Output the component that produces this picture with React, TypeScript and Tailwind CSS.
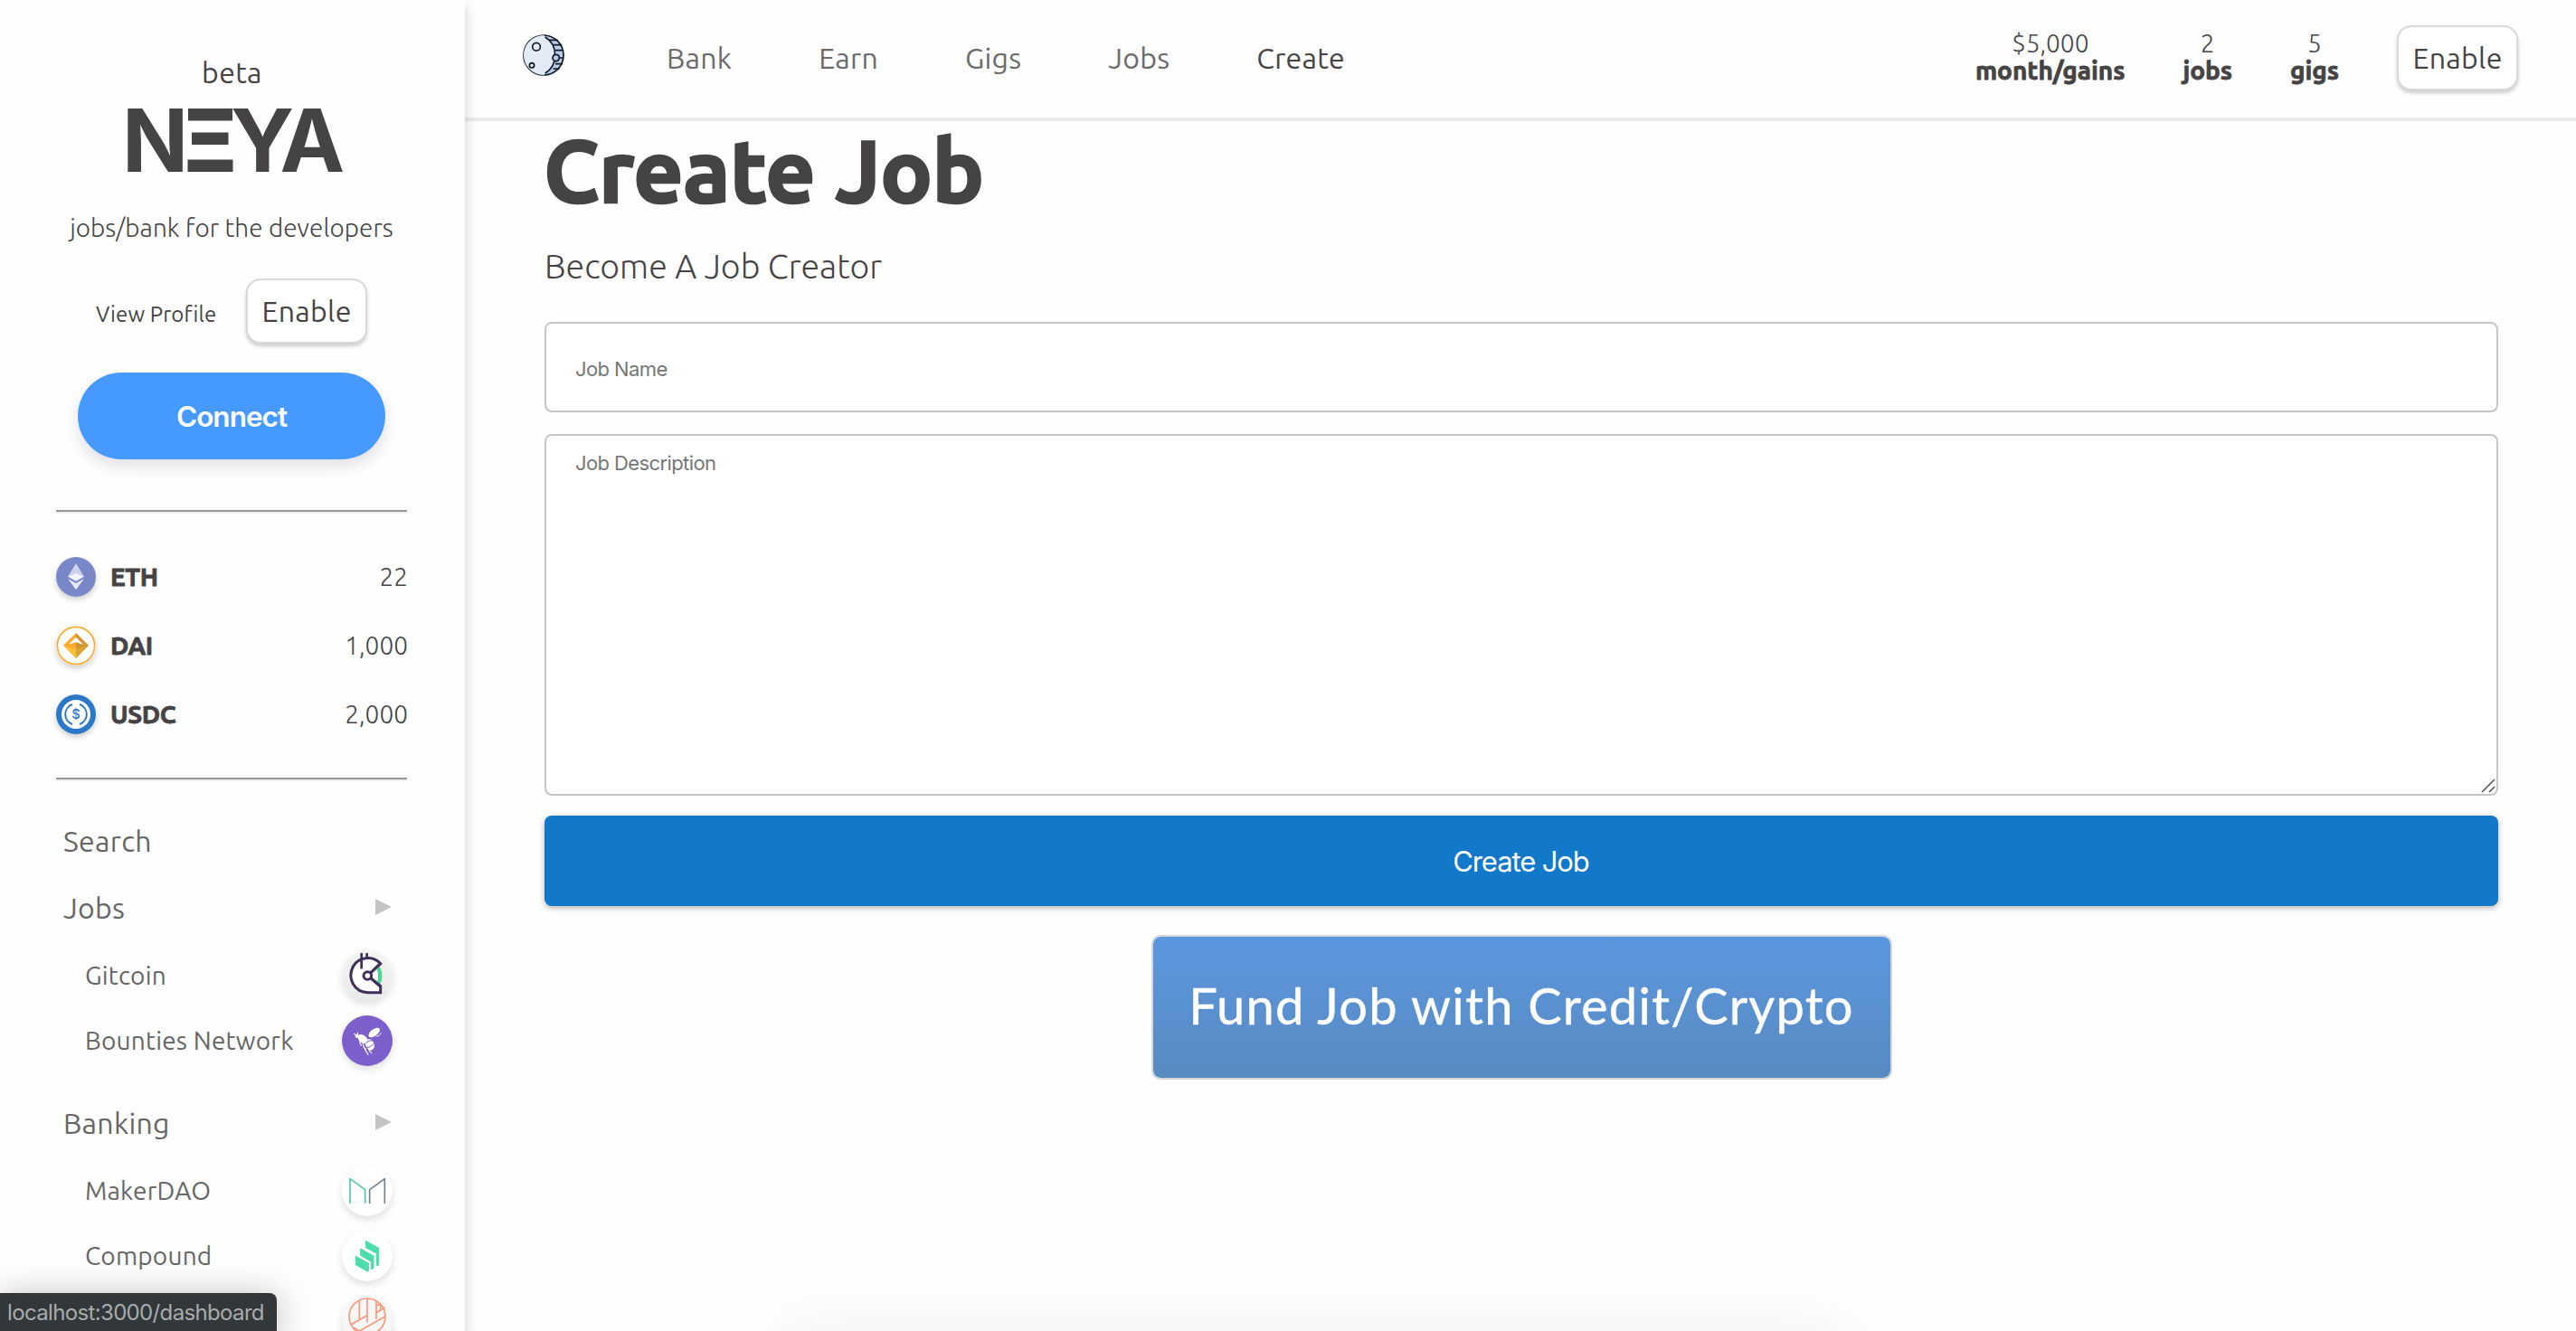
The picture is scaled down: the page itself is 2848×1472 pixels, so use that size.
import type { ReactNode } from "react";
import { clsx } from "clsx";

const navItems = ["Bank", "Earn", "Gigs", "Jobs", "Create"];
const activeItem = "Create";

const stats = [
  { value: "$5,000", label: "month/gains" },
  { value: "2", label: "jobs" },
  { value: "5", label: "gigs" },
];

const balances = [
  { symbol: "ETH", amount: "22", icon: <EthIcon /> },
  { symbol: "DAI", amount: "1,000", icon: <DaiIcon /> },
  { symbol: "USDC", amount: "2,000", icon: <UsdcIcon /> },
];

function MoonIcon() {
  return (
    <svg viewBox="54 53 138 138" className="mb-[6px] size-[46px]" fill="none" stroke="#111827" strokeWidth="5">
      <circle cx="123" cy="122" r="66" fill="#b9cce6" />
      <path d="M123 56a66 66 0 0 0 0 132l8-6c42-26 42-94 0-120z" fill="#e4ebf7" stroke="none" />
      <path d="M128 62c44 26 44 94 0 120" />
      <path d="M142 72h28M156 88h28M162 106h26M162 151h24M154 167h22" />
      <circle cx="99" cy="94" r="13" />
      <circle cx="84" cy="156" r="8" />
      <path d="M188 131h-12M165 120a11 11 0 1 0 10 11c0-6-4-11-10-11z" fill="#b9cce6" />
    </svg>
  );
}

function EthIcon() {
  return (
    <svg viewBox="36 48 132 132" className="size-full">
      <circle cx="102" cy="114" r="66" fill="#7986c7" />
      <path d="M102 69 75 113l27-12 27 12z" fill="#cdd2eb" />
      <path d="m75 113 27-12 27 12-27 15z" fill="#f4f5fb" />
      <path d="m75 120 27 15 27-15-27 37z" fill="#e6e8f5" />
    </svg>
  );
}

function DaiIcon() {
  return (
    <svg viewBox="36 276 132 132" className="size-full">
      <circle cx="102" cy="342" r="66" fill="#fff" />
      <circle cx="102" cy="342" r="62" fill="none" stroke="#fba92c" strokeWidth="5" />
      <path d="M60 341 102 300v84z" fill="#f9a92e" />
      <path d="m102 300 42 41-42 43z" fill="#d39531" />
      <path d="m78 338 24-24 24 24-24-7z" fill="#fff" />
      <path d="m62 343 40 10v31z" fill="#fcc137" />
      <path d="m142 343-40 10v31z" fill="#dca637" />
    </svg>
  );
}

function UsdcIcon() {
  return (
    <svg viewBox="36 504 132 132" className="size-full">
      <circle cx="102" cy="570" r="66" fill="#2b78c8" />
      <circle cx="102" cy="570" r="48" fill="#fff" />
      <path
        d="M90 537a35 35 0 0 0 0 66M114 537a35 35 0 0 1 0 66"
        fill="none"
        stroke="#2b78c8"
        strokeWidth="6"
      />
      <text
        x="102"
        y="586"
        textAnchor="middle"
        fill="#2b78c8"
        className="font-['Inter',sans-serif] text-[44px] font-medium"
      >
        $
      </text>
    </svg>
  );
}

function GitcoinIcon() {
  return (
    <svg viewBox="84 60 168 168" className="size-full" fill="none">
      <path
        d="M170 144 212 104C185 74 137 83 121 114c-20 40 4 86 50 86h41v-20z"
        fill="#fff"
        stroke="#3e2f5b"
        strokeWidth="9"
      />
      <path d="M203 117c12 14 12 38 1 53l-26-20v-12z" fill="#fff" />
      <path d="M204 118c9 15 9 37 1 51" stroke="#4cd796" strokeWidth="13" />
      <path d="M212 104 170 144l42 35" stroke="#3e2f5b" strokeWidth="9" />
      <circle cx="169" cy="144" r="13" fill="#fff" stroke="#3e2f5b" strokeWidth="9" />
      <path d="M149 72v46M167 72v14" stroke="#3e2f5b" strokeWidth="8" strokeLinecap="round" />
    </svg>
  );
}

function BeeIcon() {
  return (
    <svg viewBox="84 276 168 168" className="size-full" fill="#fff">
      <ellipse cx="191" cy="333" rx="22" ry="11" transform="rotate(-36 191 333)" />
      <path d="M197 345c9 0 14-4 17-11" fill="none" stroke="#fff" strokeWidth="3" />
      <ellipse cx="153" cy="354" rx="19" ry="12" transform="rotate(38 153 354)" />
      <circle cx="134" cy="345" r="6" />
      <ellipse cx="177" cy="373" rx="14" ry="19" transform="rotate(-20 177 373)" />
      <path
        d="M161 369c8-8 20-12 30-8M164 384c10-1 20-8 27-15"
        fill="none"
        stroke="#7d5fcb"
        strokeWidth="3"
      />
      <path
        d="M132 342l-8-5M136 340v-8M143 360c0 8 3 12 6 17M153 364c1 12 5 22 11 31M161 384c2 10 5 17 11 23M173 391l10 10"
        fill="none"
        stroke="#fff"
        strokeWidth="3.5"
      />
    </svg>
  );
}

function MakerIcon() {
  return (
    <svg viewBox="84 24 168 168" className="size-full" fill="none" strokeWidth="5" strokeLinejoin="round">
      <path d="M111 150V68l50 36v46" stroke="#52c6b0" />
      <path d="M226 150V68l-50 36v46" stroke="#708390" />
    </svg>
  );
}

function CompoundIcon() {
  return (
    <svg viewBox="84 240 168 168" className="size-full" fill="#4ddcab" stroke="#4ddcab" strokeWidth="3" strokeLinejoin="round">
      <path d="m130 325 42 23v26l-4 1-38-22z" />
      <path d="m146 300 43 24v41l-8 3v-25l-35-21z" />
      <path d="m163 274 43 24v56l-7 3v-41l-36-20z" />
    </svg>
  );
}

function DharmaIcon() {
  return (
    <svg viewBox="84 456 168 168" className="size-full" fill="none" stroke="#f79a7c" strokeWidth="5">
      <circle cx="168" cy="525" r="60" />
      <path d="M142 472v64M168 465v80M198 474v59M114 552l54-31M120 561l22 12 84-47M198 512l29-17M198 490l14-7M212 484v22" />
    </svg>
  );
}

const menu = [
  {
    title: "Jobs",
    items: [
      { label: "Gitcoin", icon: <GitcoinIcon />, badge: "bg-linear-to-b from-[#f2f5f2] to-[#e9eae9]" },
      { label: "Bounties Network", icon: <BeeIcon />, badge: "bg-[#7d5fcb]" },
    ],
  },
  {
    title: "Banking",
    items: [
      { label: "MakerDAO", icon: <MakerIcon />, badge: "bg-white" },
      { label: "Compound", icon: <CompoundIcon />, badge: "bg-white" },
      { label: "", icon: <DharmaIcon />, badge: "bg-[#f7f7f7]" },
    ],
  },
];

function Logo() {
  return (
    <svg viewBox="62 116 388 78" className="mt-4 h-[78px] w-[388px] shrink-0 overflow-visible" fill="#454344">
      <g className="font-['Inter',sans-serif] text-[96px] font-bold">
        <text x="135" y="190">N</text>
        <text x="255" y="190">Y</text>
        <text x="309.5" y="190">A</text>
      </g>
      <rect x="208" y="120" width="49" height="13.5" />
      <rect x="212" y="146.5" width="40.5" height="13.5" />
      <rect x="207.5" y="176.5" width="50" height="13.5" />
    </svg>
  );
}

function EnableButton() {
  return (
    <button
      type="button"
      className="h-[72px] w-[134px] shrink-0 rounded-[16px] border-2 border-[#d9d9d9] bg-white text-[32px] tracking-[0.3px] shadow-[0_3px_4px_rgba(0,0,0,0.2)]"
    >
      Enable
    </button>
  );
}

function Divider() {
  return <hr className="mt-8 h-1 w-full shrink-0 border-t-2 border-b-2 border-t-[#9a9a9a] border-b-[#eeeeee]" />;
}

function Badge({ className, children }: { className: string; children: ReactNode }) {
  return (
    <span
      className={clsx(
        "size-14 shrink-0 overflow-hidden rounded-full shadow-[0_4px_8px_rgba(0,0,0,0.12)]",
        className,
      )}
    >
      {children}
    </span>
  );
}

function Sidebar() {
  return (
    <aside className="relative z-10 flex h-full w-[514px] shrink-0 flex-col overflow-y-clip bg-[#fefefe] pt-[60px] pr-16 pl-[62px] shadow-[0_8px_14px_rgba(0,0,0,0.2)]">
      <p className="pl-px text-center text-[32px] leading-10 tracking-[0.4px]">beta</p>
      <Logo />
      <p className="mt-[38px] text-center text-[28px] leading-10 font-light tracking-[0.04px] whitespace-nowrap">
        jobs/bank for the developers
      </p>

      <div className="mt-9 flex items-center pl-11">
        <a className="mt-2 w-[166px] text-2xl tracking-[0.1px]">View Profile</a>
        <EnableButton />
      </div>
      <button
        type="button"
        className="mx-auto mt-8 h-24 w-[340px] shrink-0 rounded-full bg-[#469aff] pt-px font-['Inter',sans-serif] text-[31.5px] font-semibold tracking-[-1px] text-white shadow-[0_8px_16px_rgba(50,50,93,0.14)]"
      >
        Connect
      </button>

      <div className="mt-6">
        <Divider />
      </div>
      <ul className="mt-8 text-[28px]">
        {balances.map((item) => (
          <li key={item.symbol} className="flex h-[76px] items-center">
            <span className="size-11 rounded-full shadow-[0_3px_6px_rgba(0,0,0,0.2)]">{item.icon}</span>
            <b className="ml-4 tracking-[-0.4px] [-webkit-text-stroke:0.8px]">{item.symbol}</b>
            <span className="-mr-px ml-auto font-light">{item.amount}</span>
          </li>
        ))}
      </ul>
      <Divider />

      <nav className="mt-[29px] text-[#666666]">
        <a className="flex h-[74px] items-center pl-2 text-[32px] tracking-[0.3px]">Search</a>
        {menu.map((section) => (
          <section key={section.title} className="mb-[18px]">
            <h2 className="mb-0.5 flex h-[74px] items-center justify-between pr-[17px] pl-2 text-[32px] tracking-[0.3px]">
              {section.title}
              <svg viewBox="0 0 18 20" className="mb-[3px] h-5 w-[18px]" fill="#c4c4c4">
                <path d="M0 1v18l18-9z" />
              </svg>
            </h2>
            {section.items.map((item, i) => (
              <a key={i} className="flex h-[72px] items-center justify-between pr-4 pl-8 text-[28px] tracking-[0.2px]">
                <span>{item.label}</span>
                <Badge className={item.badge}>{item.icon}</Badge>
              </a>
            ))}
          </section>
        ))}
      </nav>
    </aside>
  );
}

function Header() {
  return (
    <header className="flex h-[134px] shrink-0 items-center border-b-4 border-[#ebebeb] pr-16 pb-0.5 pl-16">
      <MoonIcon />
      <nav className="ml-[113px] flex gap-24 text-[32px] tracking-[0.25px]">
        {navItems.map((item) => (
          <a key={item} className={item === activeItem ? "text-[#454344]" : "text-[#6b6b6b]"}>
            {item}
          </a>
        ))}
      </nav>
      <div className="ml-auto flex items-center gap-16">
        {stats.map((stat) => (
          <div key={stat.label} className="mb-[3px] flex flex-col items-center text-[28px] leading-[30px]">
            <span className="font-light">{stat.value}</span>
            <b className="[-webkit-text-stroke:0.8px]">{stat.label}</b>
          </div>
        ))}
        <EnableButton />
      </div>
    </header>
  );
}

function JobForm() {
  const field =
    "block w-full rounded-lg border-2 border-[#c6c6c6] bg-white pl-8 font-['Inter',sans-serif] text-[22px] leading-7 tracking-[-0.6px] placeholder:text-[#777777]";

  return (
    <form className="mt-10 flex flex-col">
      <input placeholder="Job Name" className={clsx(field, "h-[100px] pt-1")} />
      <div className="relative mt-6 h-[400px]">
        <textarea placeholder="Job Description" className={clsx(field, "h-full resize-none pt-4")} />
        <svg
          viewBox="0 0 16 16"
          className="absolute right-[3px] bottom-[3px] size-4"
          fill="none"
          stroke="#555555"
          strokeWidth="1.6"
        >
          <path d="M1 15 15 1M9 15l6-6" />
        </svg>
      </div>
      <button
        type="button"
        className="mt-[22px] h-[100px] rounded-lg bg-[#1278c9] pt-0.5 pr-px font-['Inter',sans-serif] text-[31px] tracking-[-1.1px] text-white shadow-[0_2px_6px_rgba(0,0,0,0.3)]"
      >
        Create Job
      </button>
      <button
        type="button"
        className="mx-auto mt-8 h-40 w-[819px] rounded-[10px] border-2 border-[#d4d6da] bg-linear-to-b from-[#5b97de] to-[#588ac2] bg-clip-padding pb-[5px] font-['Lato',sans-serif] text-[56px] tracking-[1.2px] whitespace-nowrap text-white [-webkit-text-stroke:0.4px]"
      >
        Fund Job with Credit/Crypto
      </button>
    </form>
  );
}

export default function App() {
  return (
    <div className="relative flex h-[1472px] w-[2848px] overflow-hidden bg-[#fefefe] font-['Ubuntu','Noto_Sans',sans-serif] text-[#454344]">
      <Sidebar />
      <div className="flex min-w-0 flex-1 flex-col">
        <Header />
        <main className="pr-[86px] pl-[88px]">
          <h1 className="-ml-px text-[96px] leading-[110px] font-bold tracking-[-0.4px] [-webkit-text-stroke:2.6px]">
            Create Job
          </h1>
          <p className="mt-7 text-[37.5px] leading-[44px] font-light">Become A Job Creator</p>
          <JobForm />
        </main>
      </div>

      {/* link target shown by the browser */}
      <div className="absolute bottom-0 left-0 z-20 h-[42px] w-[306px] rounded-tr-lg bg-[#32373a] pt-px pl-2 font-['Inter',sans-serif] text-2xl leading-[42px] tracking-[-0.65px] whitespace-nowrap text-[#a9abac] shadow-[0_6px_40px_rgba(0,0,0,0.3)]">
        localhost:3000/dashboard
      </div>
      <div className="absolute top-full left-[860px] h-20 w-[1180px] shadow-[0_0_70px_rgba(0,0,0,0.06)]" />
    </div>
  );
}
